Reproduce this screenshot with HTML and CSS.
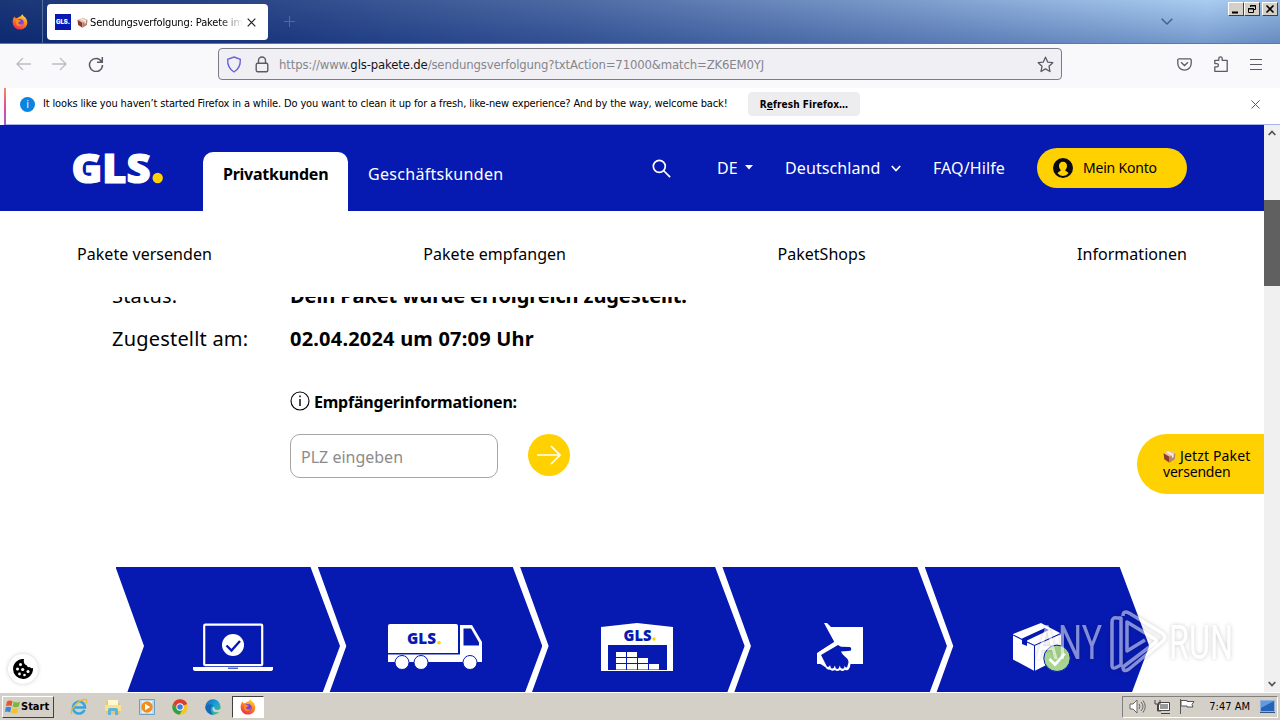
FILE: index.html
```
<!DOCTYPE html>
<html lang="de">
<head>
    <meta charset="utf-8">
    <title>Sendungsverfolgung: Pakete im Blick</title>
    <link rel="stylesheet" href="styles.css">
</head>
<body>
    <svg class="defs" width="0" height="0">
        <defs>
            <linearGradient id="flame" x1="0.8" y1="0" x2="0.3" y2="1">
                <stop offset="0" stop-color="#ffdf3a"/>
                <stop offset="0.45" stop-color="#ff8a1f"/>
                <stop offset="1" stop-color="#f0264e"/>
            </linearGradient>
            <linearGradient id="edge" x1="0" y1="0" x2="1" y2="1">
                <stop offset="0" stop-color="#1567b8"/>
                <stop offset="0.5" stop-color="#1ba0dd"/>
                <stop offset="1" stop-color="#54c95a"/>
            </linearGradient>
            <symbol id="firefox" viewBox="0 0 16 16">
                <path d="M8 15.6A7.4 7.4 0 0 1 .6 8.2C.6 5.600 1.500 3.800 2.600 2.600L3.500 4.200 5.500 4C6.500 2.600 7.500 2.600 8 2.700L10.500.2C11 2 13 2.800 14.100 4.400 17.200 9.400 14 15.600 8 15.600z" fill="url(#flame)"/>
                <circle cx="8" cy="8.600" r="3.700" fill="#7a45d8"/>
                <path d="M3.700 6.300C5.500 5.300 7 6 8.800 6.600 8 8 6.400 7.800 6.200 9.200 7 11 9.800 11 11 9 10.800 12.400 6 13.400 4.200 10.500z" fill="#ff8a1f"/>
            </symbol>
            <symbol id="parcel" viewBox="0 0 12 12">
                <path d="M6 .5l5.500 2.600L6 6.200.5 3.100z" fill="#e3c3b0"/>
                <path d="M.5 3.100L6 6.200v5.600L1.200 8.600z" fill="#8d3b2c"/>
                <path d="M11.500 3.100L6 6.200v5.600l4.800-3.200z" fill="#b9826c"/>
                <path d="M3 2l5.200 3v2.500l1.600-1V4L4.700 1.200z" fill="#f4ece6"/>
            </symbol>
        </defs>
    </svg>

    <!-- Browser chrome -->
    <div class="tab-bar">
        <div class="view-btn"><svg width="16" height="16"><use href="#firefox"/></svg></div>
        <div class="tab">
            <span class="favicon">GLS.</span>
            <svg class="tab-emoji" width="11" height="11"><use href="#parcel"/></svg>
            <span class="tab-title">Sendungsverfolgung: Pakete im Blick</span>
            <svg class="tab-close" width="9" height="9" viewBox="0 0 9 9"><path d="M.7.7l7.600 7.600M8.300.7L.7 8.300" stroke="#222" stroke-width="1.200"/></svg>
        </div>
        <svg class="new-tab" width="11" height="11" viewBox="0 0 11 11"><path d="M5.500 0v11M0 5.500h11" stroke="#5d6b7d"/></svg>
        <svg class="all-tabs" width="12" height="7" viewBox="0 0 12 7"><path d="M.7.8L6 6 11.300.8" fill="none" stroke="#3f608f" stroke-width="1.400"/></svg>
        <div class="window-controls">
            <div class="win-btn"><svg width="12" height="11"><path d="M2 8.500h6" stroke="#000" stroke-width="2"/></svg></div>
            <div class="win-btn"><svg width="12" height="11" fill="none" stroke="#000"><path d="M4.500 3V1.500h5v4H8M4 2h6M2.500 4.500h5v4h-5zM2 5h6"/></svg></div>
            <div class="win-btn close"><svg width="12" height="11"><path d="M2.500 1.500l7 7M9.500 1.500l-7 7" stroke="#000" stroke-width="1.600"/></svg></div>
        </div>
    </div>

    <div class="toolbar">
        <svg width="15" height="14" viewBox="0 0 15 14" fill="none" stroke="#bdbdc2" stroke-width="1.300"><path d="M7 1L1 7l6 6M1 7h14"/></svg>
        <svg width="15" height="14" viewBox="0 0 15 14" fill="none" stroke="#bdbdc2" stroke-width="1.300"><path d="M8 1l6 6-6 6M14 7H0"/></svg>
        <svg class="reload" width="16" height="16" viewBox="0 0 16 16" fill="none" stroke="#5b5b66" stroke-width="1.500"><path d="M13.500 5.500A6.500 6.500 0 1 0 14.500 9M14.300 1v5.200H9"/></svg>
        <div class="url-bar">
            <svg width="16" height="17" viewBox="0 0 16 17" fill="none" stroke="#6a63d9" stroke-width="1.400"><path d="M8 1l6.300 2.300c.3 5.500-1.500 10-6.300 12.700C3.200 13.300 1.400 8.800 1.700 3.300z"/></svg>
            <svg width="14" height="17" viewBox="0 0 14 17" fill="none" stroke="#5b5b66" stroke-width="1.400"><rect x="1.200" y="7.200" width="11.600" height="8.600" rx="1.500"/><path d="M3.500 7V4.500a3.500 3.500 0 0 1 7 0V7"/></svg>
            <span class="url">https://www.<b>gls-pakete.de</b>/sendungsverfolgung?txtAction=71000&amp;match=ZK6EM0YJ</span>
            <svg width="17" height="17" viewBox="0 0 17 17" fill="none" stroke="#5b5b66" stroke-width="1.300" stroke-linejoin="round"><path d="M8.500 1.200l2.200 4.900 5.100.6-3.800 3.600 1 5.200-4.500-2.600L4 15.500l1-5.200L1.200 6.700l5.100-.6z"/></svg>
        </div>
        <div class="toolbar-right">
            <svg width="15" height="13" viewBox="0 0 15 13" fill="none" stroke="#5b5b66" stroke-width="1.300"><path d="M2 .8h11a1.200 1.200 0 0 1 1.200 1.200v3.500a6.700 6.700 0 0 1-13.400 0V2A1.200 1.200 0 0 1 2 .8zM4 4.300l3.500 3.200L11 4.300"/></svg>
            <svg width="14" height="16" viewBox="0 0 14 16" fill="none" stroke="#5b5b66" stroke-width="1.300" stroke-linejoin="round"><path d="M.8 5.200V4.300h4V2.500a1.700 1.700 0 0 1 3.400 0v1.800h5v11H.8v-4.500h2a1.600 1.600 0 0 0 0-3.200h-2z"/></svg>
            <svg width="12" height="11" viewBox="0 0 12 11" stroke="#5b5b66"><path d="M0 .5h12M0 5.500h12M0 10.500h12"/></svg>
        </div>
    </div>

    <div class="notice">
        <span class="notice-icon">i</span>
        <span class="notice-text">It looks like you haven’t started Firefox in a while. Do you want to clean it up for a fresh, like-new experience? And by the way, welcome back!</span>
        <button class="refresh-btn">R<u>e</u>fresh Firefox…</button>
        <svg class="notice-close" width="9" height="9" viewBox="0 0 9 9"><path d="M.5.5l8 8M8.500.5l-8 8" stroke="#5b5b66"/></svg>
    </div>

    <div class="viewport">
        <main class="page">
            <header class="site-header">
                <svg class="logo" width="92" height="34" viewBox="0 0 92 34">
                    <text x="-1.500" y="30.500" textLength="79" lengthAdjust="spacingAndGlyphs">GLS</text>
                    <circle cx="84.700" cy="26" r="5.200" fill="#ffd100"/>
                </svg>
                <a class="segment active">Privatkunden</a>
                <a class="segment">Geschäftskunden</a>
                <div class="meta">
                    <svg class="search" width="19" height="19" viewBox="0 0 19 19" fill="none" stroke="#fff" stroke-width="1.700"><circle cx="7.300" cy="7.300" r="6"/><path d="M11.500 11.500l6.600 6.600"/></svg>
                    <a class="lang">DE</a>
                    <svg class="caret" width="8" height="5" viewBox="0 0 8 5"><path d="M0 0h8L4 4.500z" fill="#fff"/></svg>
                    <a class="country">Deutschland</a>
                    <svg class="chev" width="10" height="7" viewBox="0 0 10 7"><path d="M.8 1L5 5.500 9.200 1" fill="none" stroke="#fff" stroke-width="1.700"/></svg>
                    <a class="faq">FAQ/Hilfe</a>
                    <a class="account">
                        <svg width="20" height="20" viewBox="0 0 20 20"><circle cx="10" cy="10" r="10" fill="#0a0a14"/><path d="M10 3.800c2.600 0 4 1.800 4 4.200 0 1.800-.8 3.200-1.800 4 .2 1.600 2.700 1.500 3.300 3.200A8 8 0 0 1 10 18a8 8 0 0 1-5.500-2.800c.6-1.700 3.100-1.600 3.300-3.200C6.800 11.200 6 9.800 6 8c0-2.400 1.400-4.200 4-4.200z" fill="#ffd100"/></svg>
                        <span>Mein Konto</span>
                    </a>
                </div>
            </header>
            <nav class="sub-nav">
                <a>Pakete versenden</a>
                <a>Pakete empfangen</a>
                <a>PaketShops</a>
                <a>Informationen</a>
            </nav>

            <section class="tracking">
                <dl class="details">
                    <dt>Status:</dt>
                    <dd class="status-value">Dein Paket wurde erfolgreich zugestellt.</dd>
                    <dt>Zugestellt am:</dt>
                    <dd class="date-value">02.04.2024 um 07:09 Uhr</dd>
                </dl>
                <div class="recipient">
                    <div class="recipient-title">
                        <svg width="20" height="20" viewBox="0 0 20 20"><circle cx="10" cy="10" r="9" fill="none" stroke="#000" stroke-width="1.100"/><path d="M10 8v7M10 4.500v1.700" stroke="#000" stroke-width="1.400"/></svg>
                        <span>Empfängerinformationen:</span>
                    </div>
                    <div class="zip-form">
                        <input type="text" placeholder="PLZ eingeben">
                        <button class="zip-submit">
                            <svg width="24" height="20" viewBox="0 0 24 20" fill="none" stroke="#fff" stroke-width="1.700"><path d="M0 10h22.500M14 1l9 9-9 9"/></svg>
                        </button>
                    </div>
                </div>
            </section>

            <div class="steps">
                <div class="step">
                    <svg width="80" height="50" viewBox="0 0 80 50">
                        <rect x="11.200" y="1.700" width="58" height="40.500" rx="1" fill="none" stroke="#fff" stroke-width="2.200"/>
                        <path d="M0 44h80v2q0 2-3 2H3q-3 0-3-2z" fill="#fff"/><path d="M35 45.200h10" stroke="#061ab1"/>
                        <circle cx="40" cy="22" r="11" fill="#fff"/><path d="M33.500 22.500l5 5 8.500-9.500" fill="none" stroke="#061ab1" stroke-width="2.400"/>
                    </svg>
                </div>
                <div class="step">
                    <svg width="94" height="50" viewBox="0 0 94 50">
                        <path d="M2 1h66q2 0 2 2v27H0V3q0-2 2-2zM0 31.500h72V2h12l10 17v20H0z" fill="#fff"/>
                        <path d="M75.500 5.500h7.500l8 14v3H75.500z" fill="#061ab1"/>
                        <g fill="#fff" stroke="#061ab1"><circle cx="14" cy="39.500" r="7"/><circle cx="33" cy="39.500" r="7"/><circle cx="82" cy="39.500" r="7"/></g>
                        <text class="mini-logo" x="19" y="21" textLength="29" lengthAdjust="spacingAndGlyphs">GLS</text><circle cx="51" cy="19.700" r="1.800" fill="#ffd100"/>
                    </svg>
                </div>
                <div class="step">
                    <svg width="72" height="50" viewBox="0 0 72 50">
                        <path d="M0 4l36-4 36 4v44H0z" fill="#fff"/><path d="M7 22h59v25H7z" fill="#061ab1"/>
                        <path d="M15 29h10v5H15zM26 29h10v5H26zM15 35h10v5H15zM26 35h10v5H26zM37 35h10v5H37zM15 41h10v5.500H15zM26 41h10v5.500H26zM37 41h10v5.500H37zM48 41h10v5.500H48z" fill="#fff"/>
                        <text class="mini-logo" x="22.500" y="17.500" textLength="28" lengthAdjust="spacingAndGlyphs">GLS</text><circle cx="53" cy="16" r="1.700" fill="#ffd100"/>
                    </svg>
                </div>
                <div class="step">
                    <svg width="46" height="50" viewBox="0 0 46 50">
                        <path d="M7 0h3l4 4h32v37H33.500l-.7 3.500q-1.800 4-4.800 2.200-2.300 2.500-5 .4-3 2-5 0-3 1.800-5-.6-3 .8-4.500-2.200L3.500 41H0V30l17-11.500z" fill="#fff"/>
                        <path d="M0 2h7l10 17L0 29.500z" fill="#061ab1"/>
                        <path d="M4 32l17-10 3 1.700 9 .3q2.200 1.500.5 3.800L24 28.500c2 5 8 6.500 7.500 11l-1.300 4.500q-2 1.500-2.500-1.500-.5 5-4 2.500l-1-2.500q-1 5-4 2.700l-.8-2.700q-1.500 4.500-4 2.500l-.8-2.700q-2 3-3.500.7z" fill="#061ab1"/>
                    </svg>
                </div>
                <div class="step">
                    <svg width="58" height="50" viewBox="0 0 58 50">
                        <path d="M28 0l20 10.500v24L21.500 48 0 36.500V11z" fill="#fff"/>
                        <path d="M0 12l9.500 4.700M14 19l7.500 3.500 26.500-12M21.500 22.500V48" fill="none" stroke="#061ab1" stroke-width="1.100"/>
                        <path d="M9 15.500L32 5l4 2-22 10.500V23l-5-2z" fill="#061ab1"/>
                        <circle cx="44" cy="35.300" r="13.200" fill="#a8d690" stroke="#061ab1"/><path d="M36.500 36l5.500 5.500 10-11" fill="none" stroke="#fff" stroke-width="2.700"/>
                    </svg>
                </div>
            </div>

            <div class="ship-now">
                <div class="ship-top"><svg width="13" height="13"><use href="#parcel"/></svg><span>Jetzt Paket</span></div>
                <div class="ship-bottom">versenden</div>
            </div>
            <div class="cookie-btn">
                <svg width="20" height="20" viewBox="0 0 20 20"><path d="M11 0a10 10 0 1 0 9 9q-2 1-3-1-2.500 1-3.300-1.800Q10 5 11 0z"/><g fill="#fff"><circle cx="7.500" cy="5.500" r="1.500"/><circle cx="4.500" cy="10" r="1.500"/><circle cx="9.700" cy="10.500" r="1.600"/><circle cx="6.500" cy="15" r="1.400"/><circle cx="11.500" cy="16" r="1.300"/><circle cx="15" cy="12.500" r="1.500"/></g></svg>
            </div>
            <svg class="watermark" width="204" height="66" viewBox="0 0 204 66">
                <g class="wm-text"><text x="4" y="49" textLength="66" lengthAdjust="spacingAndGlyphs">ANY</text><text x="137" y="49" textLength="64" lengthAdjust="spacingAndGlyphs">RUN</text></g>
                <path d="M85 8q-5-1-5 4v43q0 5 5 2l4-2V8zM91 6q0-6 6-3l33 20q5 4 1 8L97 59q-6 4-6-2l33-25q1-2-1-3L95 12v29l18-11" fill="none" stroke-linejoin="round"/>
            </svg>
        </main>
        <div class="scrollbar">
            <svg width="8" height="6" viewBox="0 0 8 6"><path d="M.7 5L4 1.500 7.300 5" fill="none" stroke="#555" stroke-width="1.800"/></svg>
            <div class="thumb"></div>
            <svg width="8" height="6" viewBox="0 0 8 6"><path d="M.7 1L4 4.500 7.300 1" fill="none" stroke="#555" stroke-width="1.800"/></svg>
        </div>
    </div>

    <!-- Windows taskbar -->
    <div class="taskbar">
        <div class="start">
            <svg width="16" height="16" viewBox="0 0 16 16"><path d="M2 2.500Q5 .5 7.500 2.300L6.500 7.200Q4 5.700 1 7.200z" fill="#e8562a"/><path d="M8.700 2.600Q12 4.300 15 2.600l-1.200 5Q11 9 7.700 7.400z" fill="#7ab83c"/><path d="M.8 8.300Q3.500 7 6.300 8.400l-1.200 5Q2.500 11.800 0 13z" fill="#3c86d2"/><path d="M7.500 8.700q3 1.600 6 .2L12.300 14q-3 1.300-6-.3z" fill="#f6c22c"/></svg>
            <span>Start</span>
        </div>
        <div class="quick">
            <svg width="18" height="18" viewBox="0 0 18 18" fill="none"><path d="M14.500 12A6 6 0 1 1 15 9.500H4.500" stroke="#38a5dc" stroke-width="2.500"/><path d="M2 16C-1 13 7 3 14 1.500q4-.5 2 4" stroke="#e6b93a" stroke-width="1.300"/></svg>
            <svg width="18" height="18" viewBox="0 0 18 18"><path d="M2 3h6l1 2h7v11H2z" fill="#e9c763"/><path d="M4 2h10v5H4z" fill="#fff8d0"/><path d="M1 7h16v6H1z" fill="#f7e193"/><path d="M4 17v-5q0-2 2-2h6q2 0 2 2v5h-3v-4H7v4z" fill="#5fb2dc"/></svg>
            <svg width="16" height="16" viewBox="0 0 16 16"><path d="M.5.5h15v15H.5z" fill="#bddcf0" stroke="#6b9fc4"/><path d="M3 2h10v12H3z" fill="#e9f3f8"/><circle cx="8" cy="8" r="5.700" fill="#f28c1c"/><path d="M6 4.800L11.300 8 6 11.200z" fill="#fff"/></svg>
            <svg width="16" height="16" viewBox="0 0 16 16"><circle cx="8" cy="8" r="7.700" fill="#f7c623"/><path d="M8 8L15.200 5A7.700 7.700 0 0 0 1.300 4.200L4.800 10z" fill="#dc3d2f"/><path d="M1.300 4.200A7.700 7.700 0 0 0 7.500 15.700l3.300-5.500L8 8 4.700 9.700z" fill="#2fa04e"/><circle cx="8" cy="8" r="3.700" fill="#fff"/><circle cx="8" cy="8" r="2.800" fill="#3b7de0"/></svg>
            <svg width="16" height="16" viewBox="0 0 16 16"><path d="M15.700 9.500C15.500 3 12 .3 8 .3A7.700 7.700 0 0 0 8 15.700c3 0 5-1 6.500-3-4 1.500-7.500 0-7-3.200C8 7 10 8 9.500 10c2 1.500 5.500 1 6.200-.5z" fill="url(#edge)"/><path d="M.3 8.500C1 5 5.500 4.300 8.500 6.500 5 7 4.500 12.500 8.500 15.700A7.700 7.700 0 0 1 .3 8.500z" fill="#1769b3"/></svg>
            <div class="task-active"><svg width="16" height="16"><use href="#firefox"/></svg></div>
        </div>
        <div class="tray">
            <svg width="17" height="15" viewBox="0 0 17 15" fill="#fff" stroke="#666"><path d="M1 5h3l4-4v13l-4-4H1z"/><path d="M10 5q2 2.500 0 5M12 3q4 4.500 0 9M14 1.500q4.500 6 0 12" fill="none"/></svg>
            <svg width="17" height="15" viewBox="0 0 17 15" fill="#fff" stroke="#444"><path d="M4.500 3.500h11v8h-11zM7 14.500h9"/><path d="M6 5h8v5H6z" fill="#999" stroke="none"/><path d="M1 1v4h5V1M3.500 5v7H7" fill="none"/></svg>
            <svg width="17" height="15" viewBox="0 0 17 15" fill="#fff" stroke="#555"><path d="M1.500 0v15M2 1.500h6v1h7l-2 3 1 2.500H8V7H2z"/></svg>
            <span class="clock">7:47 AM</span>
            <svg width="15" height="13" viewBox="0 0 15 13"><path d="M.5.5h14v11H.5z" fill="#2563b8" stroke="#8fb0d8"/><path d="M1 1h13L1 8z" fill="#5e9be0"/><path d="M0 12.500h15" stroke="#34557d"/></svg>
        </div>
    </div>
</body>
</html>
```
FILE: styles.css
```
* {
    box-sizing: border-box;
}

body {
    margin: 0;
    width: 1280px;
    height: 720px;
    overflow: hidden;
    display: flex;
    flex-direction: column;
    font-family: 'DejaVu Sans Condensed', 'DejaVu Sans', sans-serif;
    font-stretch: condensed;
    font-size: 11px;
    color: #000;
    background: #f9f9fb;
}

svg {
    display: block;
    flex: none;
}

.defs {
    position: absolute;
}

/* Tab strip */
.tab-bar {
    height: 44px;
    flex: none;
    display: flex;
    align-items: center;
    background: linear-gradient(180deg, rgba(255, 255, 255, 0.06), rgba(10, 40, 120, 0.3)),
        linear-gradient(97deg, #0d2a6e 0%, #1f3c80 20%, #43629f 45%, #7799cb 72%, #a4caf0 94%, #8fb5df 100%);
    border-bottom: 1px solid #6a7690;
}

.view-btn {
    width: 43px;
    height: 43px;
    padding: 14px 0 0 12px;
    border-right: 1px solid rgba(150, 165, 200, 0.5);
}

.tab {
    width: 221px;
    height: 36px;
    margin-left: 4px;
    padding: 0 12px 0 8px;
    display: flex;
    align-items: center;
    background: #fff;
    border-radius: 4px;
}

.favicon {
    width: 16px;
    height: 16px;
    flex: none;
    background: #061ab1;
    color: #fff;
    font: 900 6px/16px Inter, sans-serif;
    text-align: center;
}

.tab-emoji {
    margin: 1px 2px 0 6px;
}

.tab-title {
    width: 154px;
    padding-top: 2px;
    overflow: hidden;
    white-space: nowrap;
    letter-spacing: -0.15px;
    mask-image: linear-gradient(90deg, #000 85%, transparent);
}

.tab-close {
    margin: 1px 0 0 4px;
}

.new-tab {
    margin-left: 16px;
}

.all-tabs {
    margin-left: auto;
    margin-right: 55px;
}

.window-controls {
    display: flex;
    align-self: flex-start;
    margin: 2px 2px 0 0;
}

.win-btn {
    width: 16px;
    height: 14px;
    padding: 1px;
    background: #d4d0c8;
    border: 1px solid;
    border-color: #fff #404040 #404040 #fff;
}

.win-btn.close {
    margin-left: 2px;
}

/* Navigation toolbar */
.toolbar {
    height: 44px;
    flex: none;
    display: flex;
    align-items: center;
    gap: 21px;
    padding: 0 18px 4px 16px;
    background: #f9f9fb;
}

.url-bar {
    width: 844px;
    height: 32px;
    margin-left: 93px;
    padding: 0 7px;
    display: flex;
    align-items: center;
    background: #f0f0f4;
    border: 1px solid #7b7b83;
    border-radius: 4px;
}

.url-bar svg:nth-child(2) {
    margin: 0 10px 0 13px;
}

.url {
    flex: 1;
    font-size: 13px;
    letter-spacing: -0.15px;
    color: #85858d;
}

.url b {
    font-weight: 400;
    color: #15141a;
}

.toolbar-right {
    margin-left: auto;
    display: flex;
    align-items: center;
    gap: 22px;
}

/* Refresh notification */
.notice {
    height: 37px;
    flex: none;
    display: flex;
    align-items: center;
    margin-left: 4px;
    padding: 0 20px 5px 14px;
    background: #fff;
    border-left: 2px solid #d259a8;
    border-image: linear-gradient(180deg, #f0905c, #d8509c, #9a5ad8) 1;
    border-width: 0 0 0 2px;
    box-shadow: inset 0 -1px #a9b5ea;
}

.notice-icon {
    width: 15px;
    height: 15px;
    border-radius: 50%;
    background: #0a84e0;
    color: #fff;
    line-height: 15px;
    text-align: center;
}

.notice-text {
    width: 684px;
    margin-left: 8px;
    padding-bottom: 2px;
    white-space: nowrap;
    letter-spacing: -0.145px;
}

.refresh-btn {
    width: 112px;
    height: 24px;
    margin-left: 21px;
    padding: 0;
    border: 0;
    border-radius: 4px;
    background: #ededf0;
    font-family: inherit;
    font-size: 10px;
    font-weight: 700;
    letter-spacing: 0.08px;
}

.notice-close {
    margin-left: auto;
}

/* Page */
.viewport {
    height: 567px;
    flex: none;
    display: flex;
}

.page {
    width: 1264px;
    position: relative;
    overflow: hidden;
    display: flex;
    flex-direction: column;
    background: #fff;
    font-family: 'Noto Sans', sans-serif;
    font-stretch: normal;
}

.site-header {
    height: 86px;
    flex: none;
    display: flex;
    padding-left: 73px;
    background: #061ab1;
    color: #fff;
    font-size: 16px;
}

.logo {
    margin: 27px 38px 0 0;
    overflow: visible;
}

.logo text {
    font: 900 41px 'Noto Sans', sans-serif;
    fill: #fff;
    stroke: #fff;
    stroke-width: 1.2;
}

.segment {
    margin-top: 27px;
    padding: 0 20px;
    line-height: 45px;
    letter-spacing: 0.3px;
}

.segment.active {
    width: 145px;
    background: #fff;
    color: #000;
    border-radius: 10px 10px 0 0;
    font-weight: 700;
    letter-spacing: -0.25px;
}

.meta {
    width: 535px;
    height: 86px;
    margin-left: auto;
    margin-right: 77px;
    display: flex;
    align-items: center;
}

.lang {
    width: 20px;
    margin-left: 46px;
}

.caret {
    margin: 0 32px 2px 8px;
}

.country {
    width: 96px;
    letter-spacing: 0.1px;
}

.chev {
    margin: 0 32px 0 10px;
}

.faq {
    width: 72px;
    letter-spacing: 0.1px;
}

.account {
    width: 150px;
    height: 40px;
    margin-left: auto;
    padding-left: 16px;
    display: flex;
    align-items: center;
    gap: 10px;
    border-radius: 20px;
    background: #ffd100;
    color: #000;
    font-size: 14px;
    letter-spacing: -0.2px;
}

.account span {
    margin-bottom: 2px;
}

.sub-nav {
    height: 86px;
    flex: none;
    display: flex;
    justify-content: space-between;
    align-items: center;
    padding: 0 77px 1px;
    font-size: 16px;
    letter-spacing: 0.04px;
}

.tracking {
    height: 270px;
    flex: none;
    overflow: hidden;
    padding-left: 112px;
}

.details {
    margin: -23px 0 0;
    display: grid;
    grid-template-columns: 178px auto;
    font-size: 20px;
    line-height: 43px;
    letter-spacing: 0.2px;
    white-space: nowrap;
}

.details dd {
    margin: 0;
    font-weight: 700;
}

.details .status-value {
    letter-spacing: -0.1px;
}

.recipient {
    margin: 28px 0 0 178px;
}

.recipient-title {
    display: flex;
    align-items: center;
    gap: 4px;
    font-size: 16px;
    font-weight: 700;
    line-height: 28px;
    letter-spacing: -0.22px;
}

.recipient-title svg {
    margin-bottom: 2px;
}

.zip-form {
    margin-top: 18px;
    display: flex;
    align-items: flex-start;
    gap: 30px;
}

.zip-form input {
    width: 208px;
    height: 44px;
    padding: 2px 10px 0;
    border: 1px solid #a6a6a6;
    border-radius: 10px;
    font: 16px 'Noto Sans', sans-serif;
}

.zip-form input::placeholder {
    color: #8c8c8c;
}

.zip-submit {
    width: 42px;
    height: 42px;
    padding: 0 0 0 9px;
    border: 0;
    border-radius: 50%;
    background: #ffd100;
}

.steps {
    display: flex;
    padding-left: 115.5px;
}

.step {
    width: 224.5px;
    height: 158px;
    flex: none;
    margin-right: -22.2px;
    padding: 56px 0 0 10px;
    display: flex;
    justify-content: center;
    background: #061ab1;
    clip-path: polygon(0 0, 195px 0, 100% 50%, 195px 100%, 0 100%, 28.5px 50%);
}

.mini-logo {
    font: 900 15px 'Noto Sans', sans-serif;
    fill: #061ab1;
}

/* Floating elements */
.ship-now {
    position: absolute;
    right: 0;
    top: 309px;
    width: 127px;
    height: 60px;
    padding: 13px 0 0 26px;
    border-radius: 30px 0 0 30px;
    background: #ffd100;
    font-size: 14px;
    line-height: 20px;
    white-space: nowrap;
}

.ship-top {
    display: flex;
    align-items: center;
    gap: 4px;
    height: 18px;
    letter-spacing: 0.15px;
}

.ship-bottom {
    height: 20px;
    margin-top: -3px;
    letter-spacing: -0.2px;
}

.cookie-btn {
    position: absolute;
    left: 8px;
    top: 529px;
    width: 30px;
    height: 30px;
    padding: 5px;
    border-radius: 50%;
    background: #fff;
    box-shadow: 0 0 4px rgba(0, 0, 0, 0.2);
}

.watermark {
    position: absolute;
    left: 1032px;
    top: 485px;
    opacity: 0.5;
    filter: drop-shadow(0 0 2px rgba(0, 0, 0, 0.4));
}

.watermark text {
    font: 48px Roboto, sans-serif;
    fill: #fff;
}

.watermark path {
    stroke: #fff;
    stroke-width: 3.5;
}

.scrollbar {
    width: 16px;
    padding: 5px 0;
    display: flex;
    flex-direction: column;
    align-items: center;
    background: #f0f0f0;
}

.thumb {
    width: 16px;
    height: 86px;
    margin: 64px 0 auto;
    background: #606060;
}

/* Taskbar */
.taskbar {
    height: 28px;
    flex: none;
    display: flex;
    align-items: center;
    padding: 0 2px;
    background: #d4d0c8;
    border-top: 1px solid #fff;
}

.start {
    width: 52px;
    height: 22px;
    padding-left: 2px;
    display: flex;
    align-items: center;
    font-weight: 700;
    border: 1px solid;
    border-color: #fff #404040 #404040 #fff;
}

.quick {
    margin-left: 16px;
    display: flex;
    align-items: center;
    gap: 17px;
}

.quick svg:nth-child(2) {
    margin: 0 -1px;
}

.task-active {
    width: 32px;
    height: 22px;
    margin-left: -6px;
    padding: 2px 7px;
    background: #fff;
    border: 1px solid;
    border-color: #404040 #fff #fff #404040;
}

.quick svg:nth-child(3) {
    margin-left: 1px;
}

.tray {
    width: 156px;
    height: 22px;
    margin-left: auto;
    padding: 0 2px 0 6px;
    display: flex;
    align-items: center;
    gap: 8px;
    border: 1px solid;
    border-color: #808080 #fff #fff #808080;
}

.clock {
    margin-left: auto;
    margin-right: 2px;
}
```
